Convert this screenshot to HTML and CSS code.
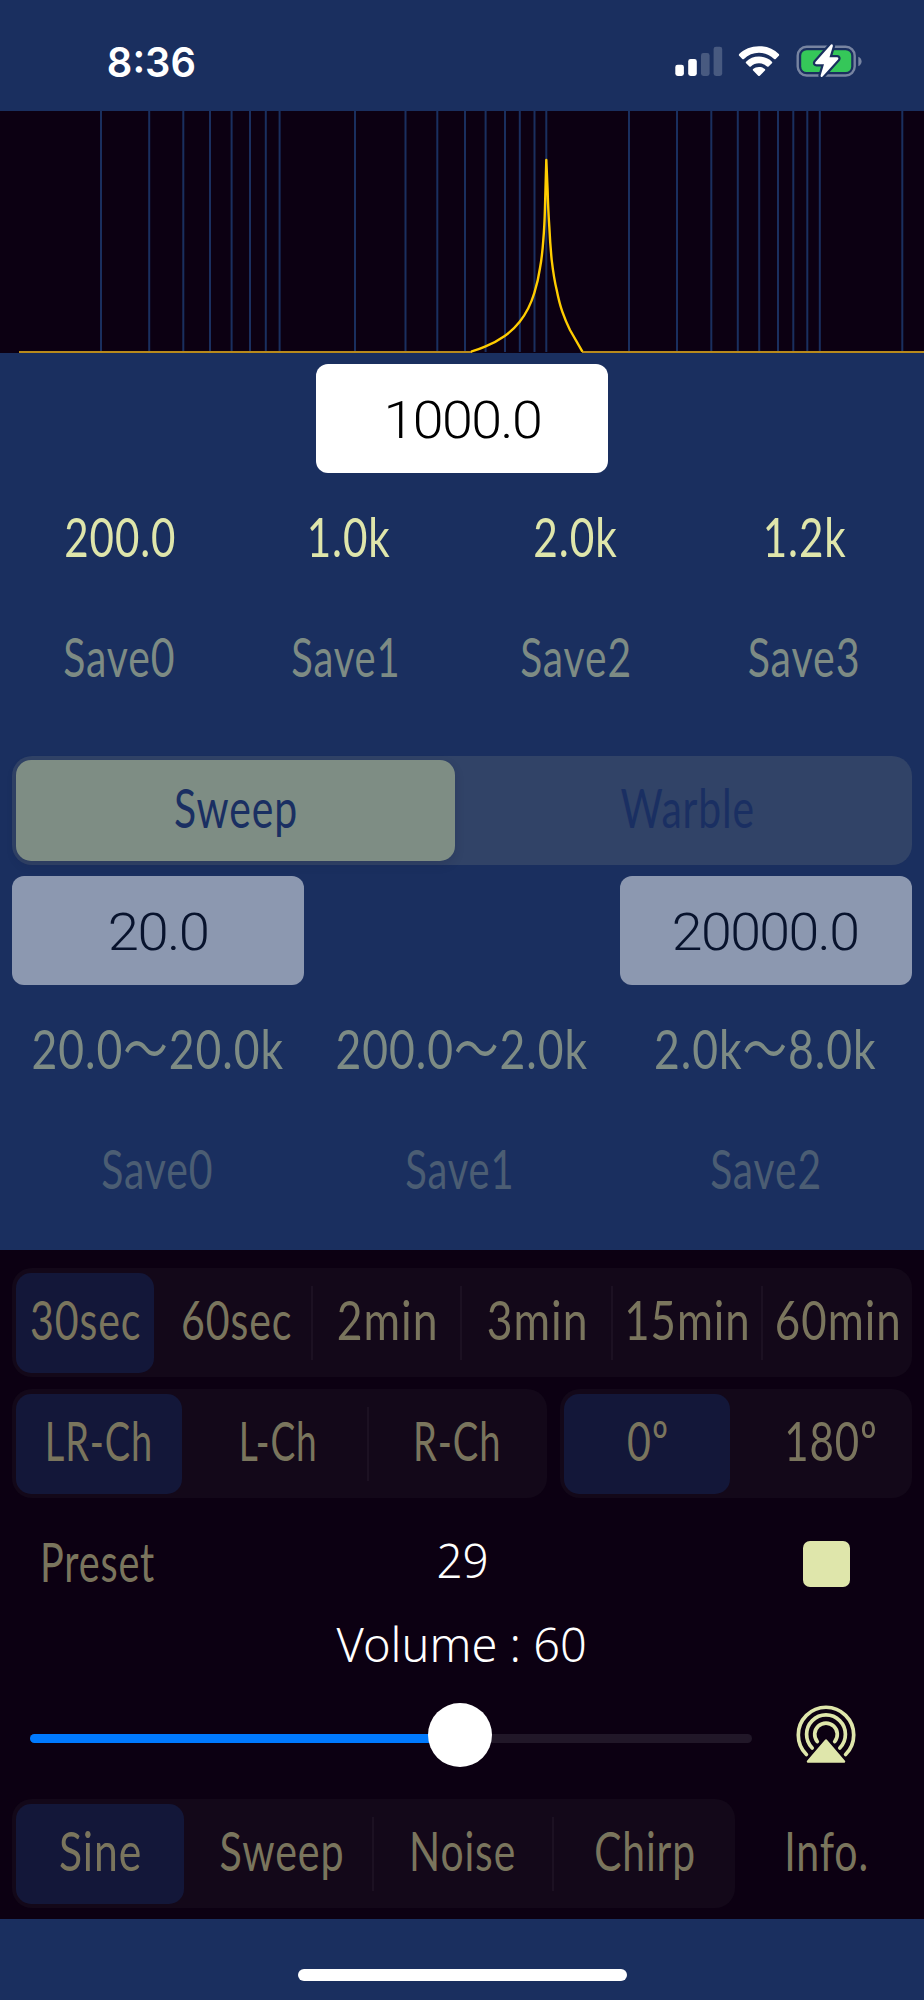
FILE: index.html
```html
<!DOCTYPE html>
<html lang="en">
<head>
<meta charset="utf-8">
<title>Tone Generator</title>
<link rel="stylesheet" href="styles.css">
</head>
<body>
<div class="screen">
  <header class="status">
    <span class="time"><span class="label" data-w="86">8:36</span></span>
    <svg class="status-icons" width="190" height="40" viewBox="674 41 190 40">
      <g fill="#fff">
        <rect x="675.3" y="64.7" width="8.6" height="11.3" rx="2.4"/>
        <rect x="688.2" y="59" width="8.6" height="17" rx="2.4"/>
        <g fill="#485a80">
          <rect x="701" y="53" width="8.6" height="23" rx="2.4"/>
          <rect x="713.6" y="46.7" width="8.6" height="29.3" rx="2.4"/>
        </g>
        <path d="M759 46.2c8 0 14.800 2.900 19.800 7.900.5.500.5 1.100 0 1.600l-3.100 3.200c-.5.500-1.100.5-1.600 0-4.300-4-9.400-6.200-15.100-6.200s-10.800 2.200-15.100 6.200c-.5.500-1.100.5-1.600 0l-3.100-3.200c-.5-.5-.5-1.100 0-1.600 5-5 11.800-7.900 19.800-7.900z"/>
        <path d="M759 56.600c5.200 0 9.600 1.900 12.900 5.100.5.500.5 1.100 0 1.600l-3.300 3.200c-.5.500-1 .5-1.500 0-2.300-2-4.900-3.200-8.100-3.200s-5.800 1.200-8.100 3.200c-.5.500-1 .5-1.500 0l-3.300-3.200c-.5-.5-.5-1.100 0-1.600 3.300-3.200 7.700-5.100 12.900-5.100z"/>
        <path d="M759 67c2.400 0 4.400.8 5.900 2.100.5.500.5 1 0 1.500l-5.100 5.100c-.5.500-1.100.5-1.600 0l-5.100-5.100c-.5-.5-.5-1 0-1.500 1.500-1.300 3.500-2.100 5.900-2.100z"/>
      </g>
      <rect x="797.700" y="46.700" width="57" height="28.800" rx="9" fill="none" stroke="#7784a1" stroke-width="2.400"/>
      <path d="M858.300 56.800c2 .8 3.300 2.500 3.300 4.700s-1.300 3.900-3.300 4.700z" fill="#7784a1"/>
      <rect x="801.200" y="50.200" width="50" height="21.800" rx="5.500" fill="#35c759"/>
      <path d="M831 44.500 815.500 62q-1.200 2 1 2.200h7.500l-3.400 11.300q0 2.500 2 1L838 59.500q1.200-2-1-2.200h-7.500l3.400-11.300q0-2.500-1.900-1.500z" fill="#fff" stroke="#1a2f5f" stroke-width="4.500" paint-order="stroke"/>
    </svg>
  </header>

  <svg class="spectrum" width="924" height="242" viewBox="0 111 924 242">
    <path class="grid" d="M101 111V352M149.200 111V352M183.300 111V352M210 111V352M231.600 111V352M250 111V352M265.800 111V352M279.600 111V352M355 111V352M405.500 111V352M437.300 111V352M465 111V352M485.600 111V352M505 111V352M519.800 111V352M534.500 111V352M546.300 111V352M629 111V352M677 111V352M711.300 111V352M737.800 111V352M759.200 111V352M778 111V352M793.300 111V352M807.300 111V352M819.800 111V352M902.300 111V352"/>
    <path class="floor" d="M19 352H472M582 352H924"/>
    <path class="curve" d="M471 351.600C477 350 481 348.500 485 346.700C493 343.500 499 340 504.700 336C511 331.500 515.500 327 519.700 321.700C527 312.500 531 304 534.300 293C537 284.500 538.700 277 540 268C541.700 259 542.600 250 543.300 240C544.300 229 544.700 218 545 206.700L546.300 160L547.600 190C548 204 548.500 215 549.300 226.700C549.900 239 550.600 249 551.700 260C553 271 554.500 281 556.700 290C558.300 298 560 305 562.300 311.700C564.500 318 567 324 570 330L582.400 351.600"/>
  </svg>

  <main class="tone">
    <div class="field freq"><span class="label nudge" data-w="152">1000.0</span></div>
    <div class="row four lit">
      <div><span class="label" data-w="109">200.0</span></div>
      <div><span class="label nudge" data-w="80">1.0k</span></div>
      <div><span class="label" data-w="82">2.0k</span></div>
      <div><span class="label nudge" data-w="80">1.2k</span></div>
    </div>
    <div class="row four dim">
      <div><span class="label shy" data-w="110">Save0</span></div>
      <div><span class="label back" data-w="105">Save1</span></div>
      <div><span class="label shy" data-w="108">Save2</span></div>
      <div><span class="label shy" data-w="109">Save3</span></div>
    </div>
    <div class="mode">
      <div class="on"><span class="label" data-w="121">Sweep</span></div>
      <div class="off"><span class="label" data-w="132">Warble</span></div>
    </div>
    <div class="range">
      <div class="field"><span class="label" data-w="97">20.0</span></div>
      <div class="field"><span class="label" data-w="183">20000.0</span></div>
    </div>
    <div class="row three dim">
      <div><span class="label" data-w="250">20.0〜20.0k</span></div>
      <div><span class="label" data-w="250">200.0〜2.0k</span></div>
      <div><span class="label" data-w="220">2.0k〜8.0k</span></div>
    </div>
    <div class="row three faint">
      <div><span class="label shy" data-w="110">Save0</span></div>
      <div><span class="label back" data-w="105">Save1</span></div>
      <div><span class="label shy" data-w="108">Save2</span></div>
    </div>
  </main>

  <section class="panel">
    <div class="seg timer">
      <div class="on"><span class="label" data-w="108">30sec</span></div>
      <div><span class="label" data-w="108">60sec</span></div><i></i>
      <div><span class="label" data-w="97">2min</span></div><i></i>
      <div><span class="label" data-w="97">3min</span></div><i></i>
      <div><span class="label" data-w="120">15min</span></div><i></i>
      <div><span class="label nudge" data-w="122">60min</span></div>
    </div>
    <div class="pair">
      <div class="seg channel">
        <div class="on"><span class="label" data-w="102">LR-Ch</span></div>
        <div><span class="label" data-w="73">L-Ch</span></div><i></i>
        <div><span class="label nudge" data-w="82">R-Ch</span></div>
      </div>
      <div class="seg phase">
        <div class="on"><span class="label" data-w="39">0º</span></div>
        <div><span class="label" data-w="88">180º</span></div>
      </div>
    </div>
    <div class="preset">
      <div class="name"><span class="label" data-w="111">Preset</span></div>
      <div class="value"><span class="label" data-w="48">29</span></div>
      <div class="side"><div class="stop"></div></div>
    </div>
    <div class="volume value"><span class="label shy" data-w="248">Volume : 60</span></div>
    <div class="output">
      <div class="slider"><div class="track"><div class="fill"></div></div><div class="thumb"></div></div>
      <svg class="airplay" width="64" height="64" viewBox="794 1703 64 64">
        <g fill="none" stroke="#dfe6ab" stroke-width="3.700" stroke-linecap="round">
          <path d="M806.400 1754.500A27.700 27.700 0 1 1 845.600 1754.500"/>
          <path d="M812.200 1748A19.400 19.400 0 1 1 839.800 1748"/>
          <path d="M817.300 1741.600A11.300 11.300 0 1 1 834.700 1741.600"/>
        </g>
        <path d="M826 1740.500 844 1761.500H808z" fill="#dfe6ab" stroke="#dfe6ab" stroke-width="2.500" stroke-linejoin="round"/>
      </svg>
    </div>
    <div class="bottom">
      <div class="seg wave">
        <div class="on"><span class="label" data-w="80">Sine</span></div>
        <div><span class="label" data-w="122">Sweep</span></div><i></i>
        <div><span class="label" data-w="101">Noise</span></div><i></i>
        <div><span class="label nudge" data-w="98">Chirp</span></div>
      </div>
      <div class="info"><span class="label" data-w="78">Info.</span></div>
    </div>
  </section>
  <footer><div class="home"></div></footer>
</div>
<script src="fit.js"></script>
</body>
</html>
```
FILE: styles.css
```css
* { box-sizing: border-box; }
body { margin: 0; background: #1a2f5f; }
.screen {
  width: 924px;
  height: 2000px;
  overflow: hidden;
  background: #1a2f5f;
  font: 400 55px/108px Lato, "Noto Sans CJK JP", sans-serif;
  letter-spacing: 1.2px;
}
.label {
  display: inline-block;
  white-space: pre;
  transform: translate(calc(var(--dx, 0px) + var(--nudge, 0px)), var(--rise, -3.5px)) scaleX(var(--sx, 1));
}
.nudge { --nudge: 2px; }
.shy { --nudge: -1.5px; }
.back { --nudge: -4px; }

.status {
  display: flex;
  justify-content: space-between;
  height: 111px;
  padding: 41px 60px 0 92px;
  color: #fff;
}
.time {
  width: 120px;
  height: 40px;
  display: flex;
  justify-content: center;
  font: 600 41px/40px Inter, sans-serif;
  letter-spacing: 0;
  --rise: 1px;
}
.status-icons { display: block; }

.spectrum { display: block; background: #0c0012; }
.grid { stroke: #1a2f5f; stroke-width: 2; fill: none; }
.floor { stroke: #b88a1c; stroke-width: 1.8; fill: none; }
.curve { stroke: #ffcc00; stroke-width: 2.4; fill: none; stroke-linejoin: round; }

.tone { height: 897px; padding: 11px 12px 0; }
.field {
  display: flex;
  justify-content: center;
  width: 292px;
  height: 109px;
  border-radius: 12px;
  background: #fff;
  color: #000;
  font-family: Roboto, sans-serif;
  font-weight: 300;
  font-size: 52px;
  letter-spacing: -1.5px;
  --rise: 3px;
}
.freq { margin: 0 auto 12px; }
.row { display: grid; column-gap: 12px; height: 108px; margin-bottom: 12px; }
.row > div { display: flex; justify-content: center; min-width: 0; }
.four { grid-template-columns: repeat(4, 216px); }
.three { grid-template-columns: repeat(3, 292px); }
.lit { color: #dfe6ab; }
.dim { color: #7d8b84; }
.faint { color: #4b5d73; }
.mode {
  display: flex;
  height: 109px;
  margin: 43px 0 11px;
  padding: 4px;
  border-radius: 20px;
  background: #314367;
  color: #1a2f62;
  line-height: 101px;
}
.mode > div { display: flex; justify-content: center; }
.mode .on { width: 439px; border-radius: 15px; background: #7e8d84; box-shadow: 0 4px 10px rgba(20, 30, 60, .18); }
.mode .off { width: 453px; padding-left: 11px; }
.range { display: flex; justify-content: space-between; margin-bottom: 12px; }
.range .field { background: #8c98b0; color: #08132d; }

.panel {
  height: 669px;
  padding: 18px 12px 0;
  background: #0c0012;
  color: #7a755d;
}
.seg {
  display: grid;
  align-items: center;
  height: 109px;
  padding: 4px;
  border-radius: 20px;
  background: #130819;
  --rise: -4.5px;
}
.seg > div { display: flex; justify-content: center; min-width: 0; height: 100px; line-height: 101px; border-radius: 15px; }
.seg > .on { background: #131739; }
.seg > i { width: 2px; height: 74px; background: #1c1122; }
.timer { grid-template-columns: 138px 157px 2px 147px 2px 149px 2px 148px 2px 145px; }
.timer > div:nth-child(2) { padding-left: 8px; }
.pair { display: flex; gap: 13px; margin-top: 12px; }
.channel { width: 535px; grid-template-columns: 166px 185px 2px 174px; }
.channel > div:nth-child(2) { padding-left: 7px; }
.phase { width: 352px; grid-template-columns: 166px 178px; }
.phase > div:nth-child(2) { padding-left: 25px; }
.preset { display: grid; grid-template-columns: 174px 552px 174px; height: 84px; margin-top: 24px; line-height: 84px; }
.preset > div { display: flex; justify-content: center; }
.side { align-items: center; padding-left: 3px; }
.stop { width: 47px; height: 46px; border-radius: 7px; background: #dfe6ab; }
.value { color: #fff; font-family: "Noto Sans", sans-serif; font-weight: 300; font-size: 48px; letter-spacing: 0; --rise: -4px; }
.volume { display: flex; justify-content: center; height: 84px; line-height: 84px; }
.output { display: flex; justify-content: space-between; height: 64px; margin-top: 13px; padding: 0 54px 0 18px; }
.slider { display: grid; align-items: center; width: 722px; height: 64px; }
.slider > div { grid-area: 1 / 1; }
.track { height: 9px; margin-top: 6px; border-radius: 5px; background: #211728; overflow: hidden; }
.fill { width: 420px; height: 9px; background: #007aff; }
.thumb { width: 64px; height: 64px; margin-left: 398px; border-radius: 50%; background: #fff; }
.airplay { display: block; }
.bottom { display: flex; margin-top: 32px; }
.wave { width: 723px; grid-template-columns: 168px 188px 2px 178px 2px 177px; }
.wave > div:nth-child(2) { padding-left: 7px; }
.info { display: flex; justify-content: center; width: 177px; padding-left: 6px; line-height: 109px; }

footer { height: 81px; padding-top: 50px; }
.home { width: 329px; height: 12px; margin: 0 auto; border-radius: 6px; background: #fff; }
```
FILE: fit.js
```js
// Condense each label so its ink spans the width given in data-w, centred in its cell.
const ctx = document.createElement('canvas').getContext('2d');
document.querySelectorAll('.label').forEach((el) => {
  const cs = getComputedStyle(el);
  ctx.font = `${cs.fontWeight} ${cs.fontSize} ${cs.fontFamily}`;
  ctx.letterSpacing = cs.letterSpacing === 'normal' ? '0px' : cs.letterSpacing;
  const m = ctx.measureText(el.textContent);
  const ink = m.actualBoundingBoxLeft + m.actualBoundingBoxRight;
  const sx = Number(el.dataset.w) / ink;
  const centre = (m.actualBoundingBoxRight - m.actualBoundingBoxLeft) / 2;
  el.style.setProperty('--sx', sx.toFixed(4));
  el.style.setProperty('--dx', `${((m.width / 2 - centre) * sx).toFixed(2)}px`);
});
```
